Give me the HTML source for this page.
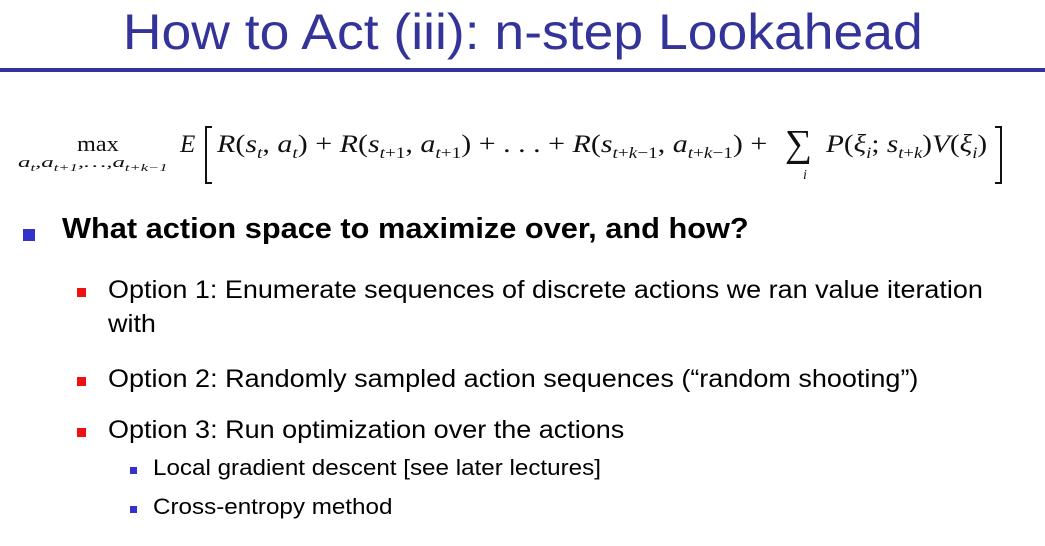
<!DOCTYPE html>
<html><head><meta charset="utf-8"><style>
body{margin:0;width:1045px;height:546px;background:#fff;position:relative;overflow:hidden;font-family:"Liberation Sans",sans-serif;}
.a{position:absolute;white-space:nowrap;transform-origin:0 0;}
.title{left:0;width:1045px;text-align:center;top:3px;font-size:50px;color:#333399;}
.title span{display:inline-block;transform:scaleX(1.07);}
.rule{position:absolute;left:0;top:68px;width:1045px;height:4px;background:#333399;}
.m{font-family:"Liberation Serif",serif;color:#111;}
.sq{position:absolute;}
</style></head><body>
<div class="a title"><span>How to Act (iii): n-step Lookahead</span></div>
<div class="rule"></div>

<div class="a m" style="left:77px;top:131px;font-size:22px;transform:scaleX(1.1);">max</div>
<div class="a m" style="left:18px;top:155px;font-size:15px;font-style:italic;transform:scaleX(1.66);">a<sub style="font-size:10px">t</sub>,a<sub style="font-size:10px">t+1</sub>,…,a<sub style="font-size:10px">t+k−1</sub></div>
<div class="a m" style="left:180px;top:131px;font-size:25px;font-style:italic;">E</div>
<svg class="a" style="left:200px;top:125px" width="15" height="60"><path d="M12 2H6V58H12" fill="none" stroke="#111" stroke-width="2"/></svg>
<div class="a m" style="left:217px;top:131px;font-size:25px;transform:scaleX(1.2);"><i>R</i>(<i>s</i><sub style="font-size:16px"><i>t</i></sub>, <i>a</i><sub style="font-size:16px"><i>t</i></sub>) + <i>R</i>(<i>s</i><sub style="font-size:16px"><i>t</i>+1</sub>, <i>a</i><sub style="font-size:16px"><i>t</i>+1</sub>) + . . . + <i>R</i>(<i>s</i><sub style="font-size:16px"><i>t</i>+<i>k</i>−1</sub>, <i>a</i><sub style="font-size:16px"><i>t</i>+<i>k</i>−1</sub>) + </div>
<div class="a m" style="left:785px;top:122px;font-size:38px;">∑</div>
<div class="a m" style="left:803px;top:168px;font-size:14px;font-style:italic;">i</div>
<div class="a m" style="left:826px;top:131px;font-size:25px;transform:scaleX(1.17);"><i>P</i>(<i>ξ</i><sub style="font-size:16px"><i>i</i></sub>; <i>s</i><sub style="font-size:16px"><i>t</i>+<i>k</i></sub>)<i>V</i>(<i>ξ</i><sub style="font-size:16px"><i>i</i></sub>)</div>
<svg class="a" style="left:993px;top:125px" width="15" height="60"><path d="M2 2H8V58H2" fill="none" stroke="#111" stroke-width="2"/></svg>

<div class="sq" style="left:23px;top:229px;width:12px;height:12px;background:#3333cc;"></div>
<div class="a" style="left:62px;top:213px;font-size:29px;font-weight:bold;transform:scaleX(1.06);">What action space to maximize over, and how?</div>

<div class="sq" style="left:77px;top:288px;width:9px;height:9px;background:#ee1111;"></div>
<div class="a" style="left:108px;top:276px;font-size:25px;transform:scaleX(1.078);">Option 1: Enumerate sequences of discrete actions we ran value iteration</div>
<div class="a" style="left:108px;top:310px;font-size:25px;transform:scaleX(1.078);">with</div>

<div class="sq" style="left:77px;top:377px;width:9px;height:9px;background:#ee1111;"></div>
<div class="a" style="left:108px;top:365px;font-size:25px;transform:scaleX(1.08);">Option 2: Randomly sampled action sequences (“random shooting”)</div>

<div class="sq" style="left:77px;top:428px;width:9px;height:9px;background:#ee1111;"></div>
<div class="a" style="left:108px;top:416px;font-size:25px;transform:scaleX(1.08);">Option 3: Run optimization over the actions</div>

<div class="sq" style="left:130px;top:467px;width:7px;height:7px;background:#3333cc;"></div>
<div class="a" style="left:153px;top:455px;font-size:22px;transform:scaleX(1.1);">Local gradient descent [see later lectures]</div>
<div class="sq" style="left:130px;top:506px;width:7px;height:7px;background:#3333cc;"></div>
<div class="a" style="left:153px;top:494px;font-size:22px;transform:scaleX(1.1);">Cross-entropy method</div>
</body></html>
